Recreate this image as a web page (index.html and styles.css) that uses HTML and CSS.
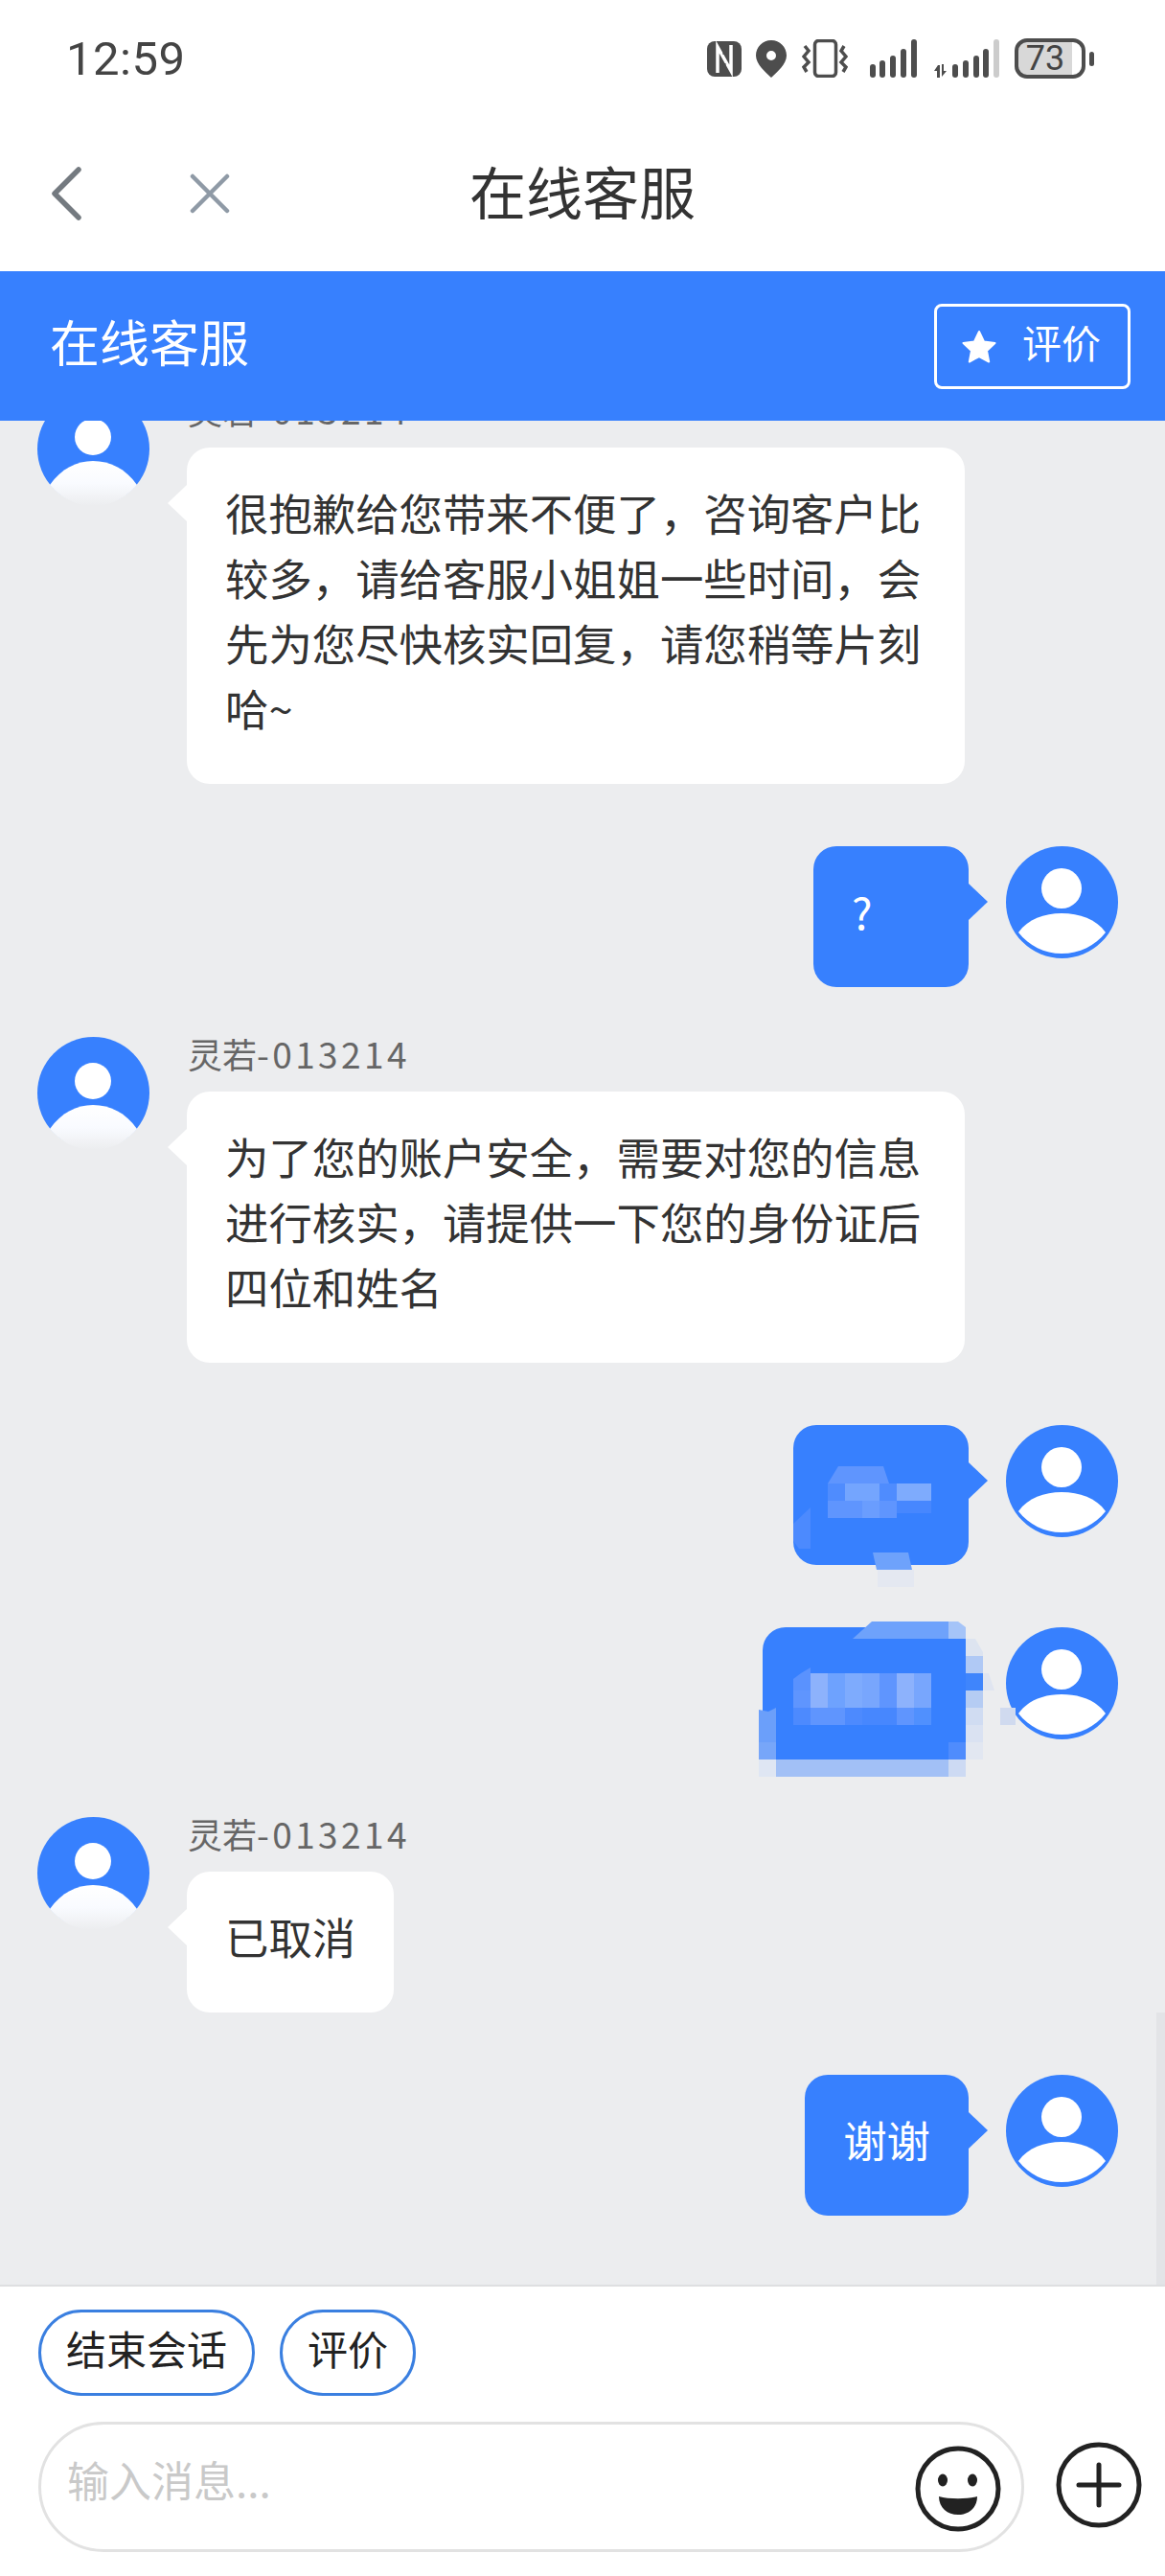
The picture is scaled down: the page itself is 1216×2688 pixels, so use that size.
FILE: index.html
```html
<!DOCTYPE html>
<html lang="zh">
<head>
<meta charset="utf-8">
<title>在线客服</title>
<link rel="stylesheet" href="styles.css">
</head>
<body>
<svg class="defs" width="0" height="0" aria-hidden="true">
  <defs>
    <linearGradient id="fade" x1="0" y1="0" x2="0" y2="1">
      <stop offset="0" stop-color="#ffffff"/>
      <stop offset="0.5" stop-color="#f9fbff"/>
      <stop offset="1" stop-color="#ecedef"/>
    </linearGradient>
    <symbol id="agent" viewBox="0 0 117 117">
      <circle cx="58.5" cy="58.5" r="58.5" fill="#3780fe"/>
      <circle cx="58" cy="46" r="19" fill="#fff"/>
      <path d="M13 96C25 79 41 71 58 71C76 71 92 79 104 96C92 110 76 118 58.500 118C41 118 25 110 13 96Z" fill="url(#fade)"/>
    </symbol>
    <symbol id="user" viewBox="0 0 117 117">
      <circle cx="58.5" cy="58.500" r="58.5" fill="#3780fe"/>
      <circle cx="58" cy="44" r="21" fill="#fff"/>
      <path d="M13 90C23 76 40 70 58 70C77 70 94 76 104 90C93 104 77 112 58 112C40 112 24 104 13 90Z" fill="#fff"/>
    </symbol>
  </defs>
</svg>

<header class="status">
  <span class="time">12:59</span>
  <div class="status-icons">
    <svg class="ic-nfc" viewBox="0 0 36 37"><rect width="36" height="37" rx="8" fill="#4d4d4d"/><path d="M11 33V6L25 31V4" fill="none" stroke="#fff" stroke-width="3.500"/><path d="M18 8V14M18 23V29" stroke="#4d4d4d" stroke-width="3"/></svg>
    <svg class="ic-pin" viewBox="0 0 32 39"><path fill-rule="evenodd" d="M16 0C7 0 0 7 0 16C0 25 10 33 16 39C22 33 32 25 32 16C32 7 25 0 16 0ZM16 11A5 5 0 1 1 16 21A5 5 0 1 1 16 11Z" fill="#4d4d4d"/></svg>
    <svg class="ic-vib" viewBox="0 0 48 40"><rect x="13.500" y="1.500" width="22" height="37" rx="4" fill="none" stroke="#4d4d4d" stroke-width="3.500"/><path d="M3 7L7 12L2 18L7 24L2 29L5 34M44 7L41 12L46 18L41 24L46 29L43 34" fill="none" stroke="#4d4d4d" stroke-width="3.500"/></svg>
    <svg class="ic-sig" viewBox="0 0 50 40"><g fill="#4d4d4d"><rect x="0" y="26" width="6" height="14" rx="3"/><rect x="10" y="22" width="6" height="18" rx="3"/><rect x="21" y="17" width="6" height="23" rx="3"/><rect x="32" y="10" width="6" height="30" rx="3"/><rect x="43" y="0" width="6" height="40" rx="3"/></g></svg>
    <svg class="ic-sig2" viewBox="0 0 70 40"><g fill="#4d4d4d"><path d="M6 27L2 33H5V40H8V27ZM10 26V39L15 33H12V26Z"/><rect x="21" y="26" width="6" height="14" rx="3"/><rect x="32" y="22" width="6" height="18" rx="3"/><rect x="43" y="17" width="6" height="23" rx="3"/><rect x="53" y="10" width="6" height="30" rx="3"/></g><rect x="64" y="0" width="6" height="40" rx="3" fill="#cccccc"/></svg>
    <div class="battery"><span class="battery-level">73</span></div>
    <i class="battery-nub"></i>
  </div>
</header>

<nav class="navbar">
  <svg class="ic-back" viewBox="0 0 34 56"><path d="M30 3L5 28L30 53" fill="none" stroke="#747a80" stroke-width="5.500" stroke-linecap="round" stroke-linejoin="round"/></svg>
  <svg class="ic-close" viewBox="0 0 42 42"><path d="M3 3L39 39M39 3L3 39" fill="none" stroke="#8f9aa6" stroke-width="4.500" stroke-linecap="round"/></svg>
  <h1 class="nav-title">在线客服</h1>
</nav>

<section class="banner">
  <span class="banner-title">在线客服</span>
  <button class="rate-btn">
    <svg class="ic-star" viewBox="0 0 36 35"><path d="M18 2L23 12.500L34.500 14L26 22L28.200 33.500L18 28L7.800 33.500L10 22L1.500 14L13 12.500Z" fill="#fff" stroke="#fff" stroke-width="2" stroke-linejoin="round"/></svg>
    <span class="rate-label">评价</span>
  </button>
</section>

<main class="chat">
  <div class="scrollbar"></div>

  <article class="row left first">
    <svg class="avatar"><use href="#agent"/></svg>
    <div class="col">
      <div class="name">灵若<span class="id">-013214</span></div>
      <div class="bubble in">很抱歉给您带来不便了，咨询客户比较多，请给客服小姐姐一些时间，会先为您尽快核实回复，请您稍等片刻哈~</div>
    </div>
  </article>

  <article class="row right">
    <div class="bubble out wide">?</div>
    <svg class="avatar"><use href="#user"/></svg>
  </article>

  <article class="row left">
    <svg class="avatar"><use href="#agent"/></svg>
    <div class="col">
      <div class="name">灵若<span class="id">-013214</span></div>
      <div class="bubble in">为了您的账户安全，需要对您的信息进行核实，请提供一下您的身份证后四位和姓名</div>
    </div>
  </article>

  <article class="row right">
    <div class="bubble out blur-a">
      <svg class="mosaic mosaic-a" viewBox="828 1487 183 190">
        <path d="M875 1530H922L928 1548H864Z" fill="#5f95fe"/>
        <rect x="864" y="1548" width="18" height="18" fill="#4f8cfe"/>
        <rect x="882" y="1548" width="36" height="18" fill="#74a5fe"/>
        <rect x="918" y="1548" width="18" height="18" fill="#4f8cfe"/>
        <rect x="936" y="1548" width="36" height="18" fill="#7eabfd"/>
        <rect x="864" y="1566" width="36" height="18" fill="#5f95fe"/>
        <rect x="900" y="1566" width="18" height="18" fill="#6a9dfe"/>
        <rect x="918" y="1566" width="18" height="18" fill="#5f95fe"/>
        <rect x="936" y="1566" width="36" height="13" fill="#4787fe"/>
        <path d="M828 1590L846 1573V1616H834L828 1608Z" fill="#4c8afe"/>
        <path d="M911 1620H948L952 1638H915Z" fill="#6ea2fb"/>
        <rect x="916" y="1638" width="38" height="18" fill="#e4e8f1"/>
      </svg>
    </div>
    <svg class="avatar"><use href="#user"/></svg>
  </article>

  <article class="row right">
    <div class="bubble out blur-b">
      <svg class="mosaic mosaic-b" viewBox="792 1692 270 162">
        <rect x="1008" y="1692" width="8" height="162" fill="#ecedef"/>
        <path d="M890 1710L910 1692H1000V1710Z" fill="#6ea2fb"/>
        <path d="M990 1692H1000L1008 1698V1710H990Z" fill="#a5c4f8"/>
        <path d="M1008 1710H1018L1026 1724V1728H1008Z" fill="#dde4f0"/>
        <rect x="1008" y="1728" width="18" height="18" fill="#b0c9f5"/>
        <rect x="1008" y="1746" width="18" height="18" fill="#3f85fc"/>
        <path d="M1026 1746H1032L1038 1764H1026Z" fill="#e0e5f0"/>
        <rect x="1008" y="1764" width="18" height="18" fill="#b5ccf3"/>
        <rect x="1008" y="1782" width="18" height="18" fill="#d0dcf2"/>
        <rect x="1008" y="1800" width="18" height="18" fill="#dae2f2"/>
        <rect x="1008" y="1818" width="18" height="18" fill="#e2e7f1"/>
        <rect x="1044" y="1782" width="16" height="18" fill="#d0daef"/>
        <path d="M836 1746L846 1740V1764H828V1752Z" fill="#5a92fe"/>
        <rect x="846" y="1746" width="18" height="36" fill="#8db2fc"/>
        <rect x="864" y="1746" width="18" height="36" fill="#6ea2fe"/>
        <rect x="882" y="1746" width="18" height="36" fill="#7eabfd"/>
        <rect x="900" y="1746" width="18" height="36" fill="#78a6fd"/>
        <rect x="918" y="1746" width="18" height="36" fill="#5f95fe"/>
        <rect x="936" y="1746" width="18" height="36" fill="#8db2fc"/>
        <rect x="954" y="1746" width="18" height="36" fill="#78a6fd"/>
        <rect x="828" y="1764" width="18" height="18" fill="#5f95fe"/>
        <rect x="828" y="1782" width="18" height="18" fill="#4d8afe"/>
        <rect x="846" y="1782" width="36" height="18" fill="#5f95fe"/>
        <rect x="882" y="1782" width="18" height="18" fill="#4d8afe"/>
        <rect x="900" y="1782" width="36" height="18" fill="#4787fe"/>
        <rect x="936" y="1782" width="18" height="18" fill="#5f95fe"/>
        <rect x="954" y="1782" width="18" height="18" fill="#5090fe"/>
        <path d="M792 1784L802 1786L810 1782V1818H792Z" fill="#6b9ffa"/>
        <rect x="792" y="1818" width="18" height="18" fill="#77a6f9"/>
        <rect x="990" y="1818" width="18" height="18" fill="#4f8cfd"/>
        <rect x="792" y="1836" width="18" height="18" fill="#dfe6f3"/>
        <rect x="810" y="1836" width="180" height="18" fill="#a2c0f6"/>
        <rect x="990" y="1836" width="18" height="18" fill="#cddaf3"/>
      </svg>
    </div>
    <svg class="avatar"><use href="#user"/></svg>
  </article>

  <article class="row left">
    <svg class="avatar"><use href="#agent"/></svg>
    <div class="col">
      <div class="name">灵若<span class="id">-013214</span></div>
      <div class="bubble in">已取消</div>
    </div>
  </article>

  <article class="row right">
    <div class="bubble out">谢谢</div>
    <svg class="avatar"><use href="#user"/></svg>
  </article>
</main>

<footer class="composer">
  <div class="chips">
    <span class="chip">结束会话</span>
    <span class="chip">评价</span>
  </div>
  <div class="input-row">
    <div class="input">
      <span class="placeholder">输入消息...</span>
      <svg class="ic-emoji" viewBox="0 0 90 90"><circle cx="45" cy="45" r="42" fill="none" stroke="#222" stroke-width="5"/><ellipse cx="29" cy="36" rx="5" ry="6.500" fill="#222"/><ellipse cx="60" cy="36" rx="5" ry="6.500" fill="#222"/><path d="M25 53C35 56 55 56 65 53C65 65 56 72 45 72C34 72 25 65 25 53Z" fill="#222"/></svg>
    </div>
    <svg class="ic-plus" viewBox="0 0 90 90"><circle cx="45" cy="45" r="42" fill="none" stroke="#222" stroke-width="5"/><path d="M45 24V66M24 45H66" fill="none" stroke="#222" stroke-width="5" stroke-linecap="round"/></svg>
  </div>
</footer>
</body>
</html>
```
FILE: styles.css
```css
* { box-sizing: border-box; }

html, body {
  margin: 0;
  padding: 0;
}

body {
  width: 1216px;
  height: 2688px;
  display: flex;
  flex-direction: column;
  overflow: hidden;
  background: #fff;
  color: #333;
  font-family: "Noto Sans CJK SC", "Noto Sans", sans-serif;
}

.defs { position: absolute; }

/* status bar */
.status {
  height: 120px;
  flex: none;
  display: flex;
  align-items: center;
  justify-content: space-between;
  padding: 2px 74px 0 69px;
}

.time {
  font-family: Roboto, sans-serif;
  font-size: 49px;
  letter-spacing: 0.5px;
  color: #444;
}

.status-icons {
  display: flex;
  align-items: center;
}

.ic-nfc { width: 36px; height: 37px; margin-right: 15px; }
.ic-pin { width: 32px; height: 39px; margin-right: 16px; }
.ic-vib { width: 48px; height: 40px; margin-right: 23px; }
.ic-sig { width: 50px; height: 40px; margin-right: 15px; }
.ic-sig2 { width: 70px; height: 40px; margin-right: 16px; }

.battery {
  width: 74px;
  height: 42px;
  border: 4px solid #4d4d4d;
  border-radius: 13px;
  background: linear-gradient(90deg, #d8d8d8 0 56px, #fff 56px);
  display: flex;
  align-items: center;
  justify-content: center;
  padding-right: 10px;
}

.battery-level {
  font-family: Roboto, sans-serif;
  font-size: 36px;
  line-height: 34px;
  color: #444;
}

.battery-nub {
  width: 5px;
  height: 15px;
  margin-left: 4px;
  border-radius: 3px;
  background: #4d4d4d;
}

/* nav */
.navbar {
  height: 163px;
  flex: none;
  position: relative;
  display: flex;
  align-items: center;
  padding-left: 52px;
}

.ic-back { width: 34px; height: 56px; margin-right: 112px; }
.ic-close { width: 42px; height: 42px; }

.nav-title {
  position: absolute;
  left: 0;
  right: 0;
  top: 41px;
  margin: 0;
  text-align: center;
  font-size: 59px;
  line-height: 76px;
  font-weight: 400;
  color: #333;
}

/* banner */
.banner {
  height: 156px;
  flex: none;
  display: flex;
  align-items: center;
  justify-content: space-between;
  padding: 0 36px 10px 52px;
  background: #3780fe;
  color: #fff;
  position: relative;
  z-index: 2;
}

.banner-title {
  font-size: 52px;
  line-height: 70px;
}

.rate-btn {
  width: 205px;
  height: 89px;
  margin-top: 10px;
  padding: 0 28px 10px 26px;
  display: flex;
  align-items: center;
  justify-content: space-between;
  border: 3px solid #fff;
  border-radius: 8px;
  background: transparent;
  color: #fff;
  font-family: inherit;
  font-size: 41px;
}

.ic-star { width: 36px; height: 35px; flex: none; margin-top: 10px; }

/* chat */
.chat {
  flex: 1;
  position: relative;
  overflow: hidden;
  background: #ecedef;
  padding: 0 49px 0 39px;
}

.scrollbar {
  position: absolute;
  right: 0;
  top: 1661px;
  width: 9px;
  height: 284px;
  background: #e3e4e7;
}

.row {
  display: flex;
  align-items: flex-start;
  gap: 39px;
  margin-bottom: 65px;
}

.row.first { margin-top: -29px; }
.row.right { justify-content: flex-end; }
.row.right + .row.left { margin-top: -13px; }

.avatar {
  width: 117px;
  height: 117px;
  flex: none;
}

.col {
  display: flex;
  flex-direction: column;
  align-items: flex-start;
}

.name {
  height: 40px;
  margin: -3px 0 20px 1px;
  font-size: 36px;
  line-height: 40px;
  color: #666;
  white-space: nowrap;
}

.id {
  font-size: 37px;
  letter-spacing: 3.4px;
}

.bubble {
  position: relative;
  padding: 33px 40px 46px;
  font-size: 45.4px;
  line-height: 68px;
  border-radius: 24px;
}

.bubble::before {
  content: "";
  position: absolute;
  top: 39px;
  border-top: 19px solid transparent;
  border-bottom: 19px solid transparent;
}

.bubble.in {
  max-width: 812px;
  background: #fff;
  color: #333;
}

.bubble.in::before {
  left: -20px;
  border-right: 20px solid #fff;
}

.bubble.out {
  background: #3780fe;
  color: #fff;
}

.bubble.out::before {
  right: -20px;
  border-left: 20px solid #3780fe;
}

.bubble.wide { width: 162px; }
.bubble.blur-a { width: 183px; height: 146px; }
.bubble.blur-b { width: 215px; height: 146px; }

.mosaic {
  position: absolute;
  overflow: visible;
}

.mosaic-a {
  left: 0;
  top: 0;
  width: 183px;
  height: 190px;
}

.mosaic-b {
  left: -4px;
  top: -6px;
  width: 270px;
  height: 162px;
}

/* composer */
.composer {
  height: 304px;
  flex: none;
  border-top: 2px solid #dedfe1;
  background: #fff;
  padding: 24px 24px 0 40px;
}

.chips {
  display: flex;
  gap: 26px;
}

.chip {
  height: 90px;
  padding: 0 26px 11px;
  display: flex;
  align-items: center;
  border: 3px solid #3a7fe0;
  border-radius: 45px;
  font-size: 42px;
  color: #222;
}

.input-row {
  display: flex;
  align-items: flex-start;
  margin-top: 27px;
}

.input {
  width: 1029px;
  height: 136px;
  flex: none;
  display: flex;
  align-items: center;
  justify-content: space-between;
  padding: 0 21px 0 27px;
  border: 3px solid #e2e2e2;
  border-radius: 68px;
}

.placeholder {
  font-size: 44px;
  color: #c9c9c9;
  margin-top: -16px;
}

.ic-emoji { width: 90px; height: 90px; flex: none; margin-top: 3px; }
.ic-plus { width: 90px; height: 90px; flex: none; margin: 21px 0 0 33px; }
```
